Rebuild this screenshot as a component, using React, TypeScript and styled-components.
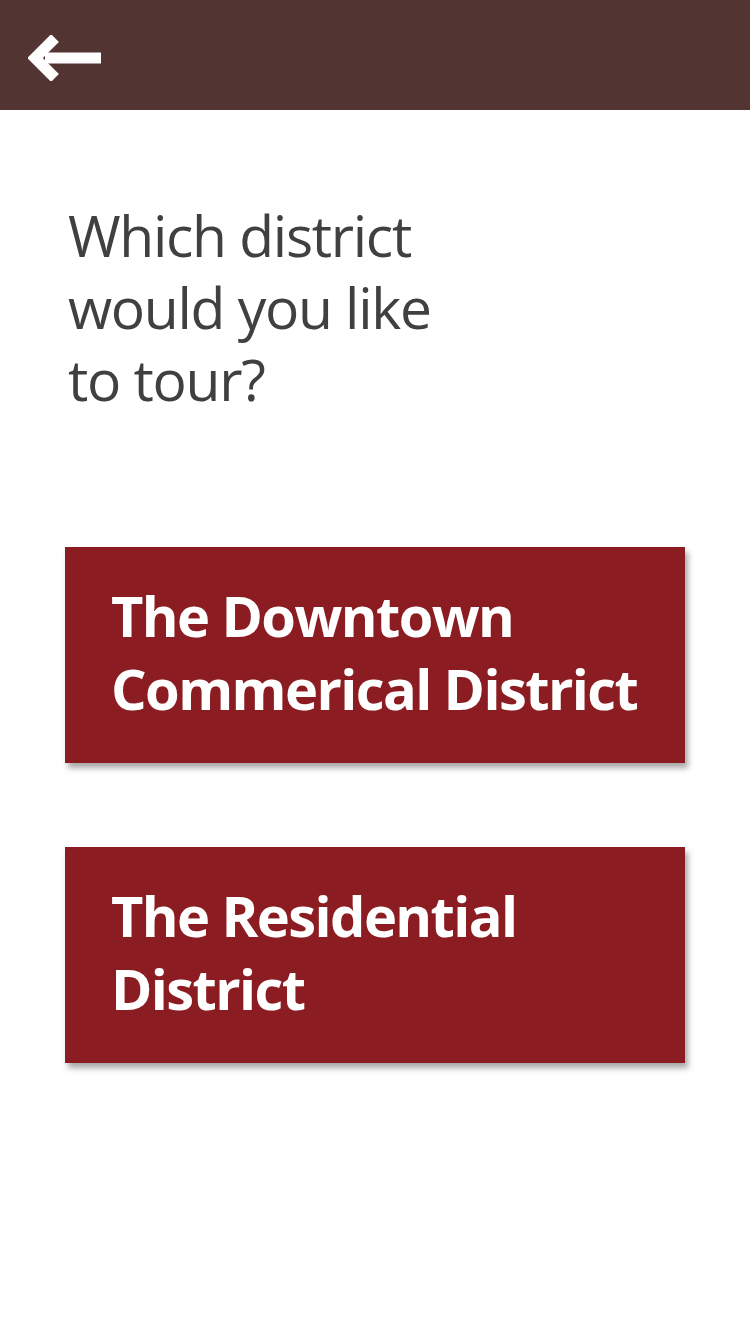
import React from "react";
import styled, { createGlobalStyle } from "styled-components";

const Global = createGlobalStyle`
  html, body { margin: 0; padding: 0; background: #ffffff; }
  body { font-family: "Open Sans", "Noto Sans", sans-serif; }
`;

const Page = styled.div`
  width: 750px;
  min-height: 1334px;
  background: #ffffff;
  display: flex;
  flex-direction: column;
`;

const Header = styled.header`
  height: 110px;
  background: #523432;
  display: flex;
  align-items: center;
  padding-left: 28px;
  box-sizing: border-box;
`;

const BackButton = styled.button`
  border: 0;
  background: none;
  padding: 0;
  margin-top: 6px;
  display: flex;
  cursor: pointer;
`;

const Main = styled.main`
  display: flex;
  flex-direction: column;
  padding: 89px 65px 0 68px;
`;

const Question = styled.h1`
  margin: 0;
  font-family: "Open Sans", sans-serif;
  font-weight: 400;
  font-size: 57px;
  line-height: 72px;
  letter-spacing: -1.3px;
  color: #404040;
`;

const Choices = styled.div`
  display: flex;
  flex-direction: column;
  gap: 84px;
  margin-top: 132px;
  margin-left: -3px;
`;

const Choice = styled.button`
  width: 620px;
  height: 216px;
  box-sizing: border-box;
  border: 0;
  background: #8b1c21;
  box-shadow: 3px 5px 6px rgba(0, 0, 0, 0.35);
  text-align: left;
  padding: 32px 0 0 46px;
  display: flex;
  align-items: flex-start;
  cursor: pointer;
`;

const ChoiceLabel = styled.span`
  font-family: "Open Sans", sans-serif;
  font-weight: 700;
  font-size: 56px;
  line-height: 73px;
  letter-spacing: -1.6px;
  color: #ffffff;
`;

const BackArrow = () => (
  <svg width="74" height="46" viewBox="0 0 74 46">
    <path d="M17 23 H73" stroke="#fff" strokeWidth="11" />
    <path d="M27 3 L7 23 L27 43" stroke="#fff" strokeWidth="11" fill="none" strokeLinejoin="miter" />
  </svg>
);

export default function App() {
  return (
    <Page>
      <Global />
      <Header>
        <BackButton aria-label="Back">
          <BackArrow />
        </BackButton>
      </Header>
      <Main>
        <Question>
          Which district
          <br />
          would you like
          <br />
          to tour?
        </Question>
        <Choices>
          <Choice>
            <ChoiceLabel>
              The Downtown
              <br />
              Commerical District
            </ChoiceLabel>
          </Choice>
          <Choice>
            <ChoiceLabel>
              The Residential
              <br />
              District
            </ChoiceLabel>
          </Choice>
        </Choices>
      </Main>
    </Page>
  );
}
